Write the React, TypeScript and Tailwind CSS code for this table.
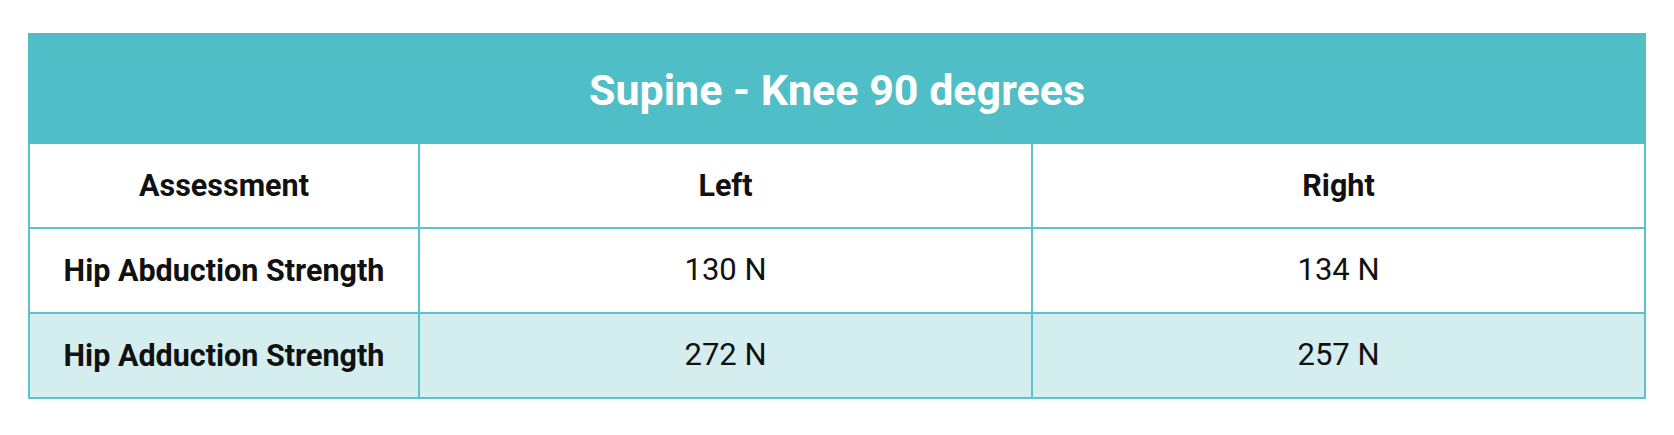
const rows = [
  { name: "Hip Abduction Strength", left: "130 N", right: "134 N", shaded: false },
  { name: "Hip Adduction Strength", left: "272 N", right: "257 N", shaded: true },
];

export default function App() {
  return (
    <main className="min-h-screen bg-white px-[28px] pt-[33px] font-['Roboto',sans-serif] text-[#111]">
      <table className="w-full table-fixed border-collapse">
        <colgroup>
          <col className="w-[390px]" />
          <col className="w-[613px]" />
          <col />
        </colgroup>
        <thead>
          <tr>
            <th
              colSpan={3}
              className="h-[109px] border-2 border-[#50bec6] bg-[#50bec6] pt-[4px] text-center text-[43px] font-bold text-white"
            >
              Supine - Knee 90 degrees
            </th>
          </tr>
          <tr>
            {["Assessment", "Left", "Right"].map((label) => (
              <th
                key={label}
                className="h-[85px] border-2 border-[#5cc3ca] bg-white text-center text-[30.5px] font-bold"
              >
                {label}
              </th>
            ))}
          </tr>
        </thead>
        <tbody>
          {rows.map((row) => (
            <tr key={row.name} className={row.shaded ? "bg-[#d4eef0]" : "bg-white"}>
              <td className="h-[85px] border-2 border-[#5cc3ca] text-center text-[30.5px] font-bold">
                {row.name}
              </td>
              <td className="h-[85px] border-2 border-[#5cc3ca] text-center text-[31px]">{row.left}</td>
              <td className="h-[85px] border-2 border-[#5cc3ca] text-center text-[31px]">{row.right}</td>
            </tr>
          ))}
        </tbody>
      </table>
    </main>
  );
}
